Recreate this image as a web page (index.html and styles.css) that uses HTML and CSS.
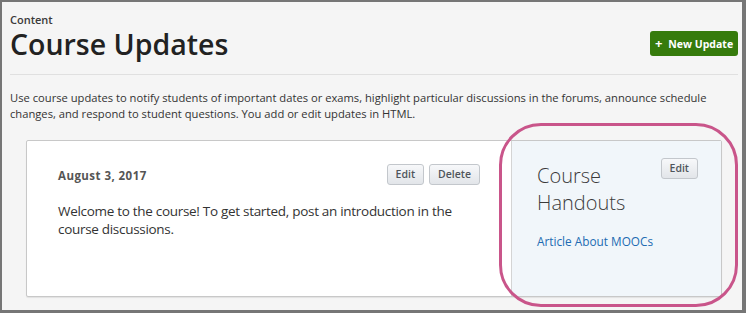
FILE: index.html
```html
<!DOCTYPE html>
<html>
<head>
<meta charset="utf-8">
<link rel="stylesheet" href="styles.css">
</head>
<body>
<div class="frame">
  <header class="page-header">
    <div class="eyebrow">Content</div>
    <div class="title-row">
      <h1 class="title">Course Updates</h1>
      <button class="btn-primary"><span class="plus">+</span>New Update</button>
    </div>
  </header>
  <p class="intro">Use course updates to notify students of important dates or exams, highlight particular discussions in the forums, announce schedule changes, and respond to student questions. You add or edit updates in HTML.</p>
  <div class="card">
    <div class="update">
      <div class="update-head">
        <div class="date">August 3, 2017</div>
        <div class="actions">
          <button class="btn">Edit</button>
          <button class="btn">Delete</button>
        </div>
      </div>
      <p class="update-body">Welcome to the course! To get started, post an introduction in the course discussions.</p>
    </div>
    <aside class="handouts">
      <div class="handouts-head">
        <h2 class="handouts-title">Course Handouts</h2>
        <button class="btn">Edit</button>
      </div>
      <a class="handout-link" href="#">Article About MOOCs</a>
    </aside>
    <div class="highlight"></div>
  </div>
</div>
</body>
</html>
```
FILE: styles.css
```css
* { box-sizing: border-box; }
html, body { margin: 0; padding: 0; }
body {
  font-family: "Open Sans", "DejaVu Sans", sans-serif;
  color: #333;
  background: #777;
}
.frame {
  width: 746px;
  height: 313px;
  overflow: hidden;
  background: #f5f5f5;
  border-style: solid;
  border-color: #767676;
  border-width: 2px 4px 3px 2px;
  padding: 10px 4px 0 8px;
}
.page-header {
  border-bottom: 1px solid #e0e0e0;
  padding-bottom: 13px;
}
.eyebrow {
  font-size: 11px;
  line-height: 15px;
  font-weight: 600;
  color: #3a3a3a;
  margin-bottom: 1px;
}
.title-row {
  display: flex;
  align-items: center;
  justify-content: space-between;
}
.title {
  margin: 0;
  font-size: 28.5px;
  line-height: 33px;
  font-weight: 600;
  color: #222;
}
.btn-primary {
  font-family: inherit;
  background: #367b0c;
  color: #fff;
  border: none;
  border-radius: 3px;
  height: 25px;
  width: 88px;
  padding: 0;
  font-size: 10.5px;
  font-weight: 700;
  display: flex;
  align-items: center;
  justify-content: center;
  margin-top: -2px;
}
.plus {
  font-size: 13px;
  font-weight: 700;
  margin-right: 6px;
  line-height: 1;
}
.intro {
  margin: 15px 0 0;
  font-size: 11.2px;
  line-height: 15.5px;
  color: #333;
}
.card {
  position: relative;
  display: flex;
  margin: 19px 16px 0;
  height: 157px;
  background: #fff;
  border: 1px solid #c8c8c8;
  border-radius: 2px;
  box-shadow: 0 1px 1px rgba(0,0,0,0.08);
}
.update {
  flex: 1;
  padding: 23px 31px 0;
  border-right: 1px solid #d4d4d4;
}
.update-head {
  display: flex;
  align-items: center;
  justify-content: space-between;
}
.date {
  font-size: 11.5px;
  font-weight: 700;
  letter-spacing: 0.45px;
  color: #555;
  margin-top: 2px;
}
.actions { display: flex; gap: 5px; }
.btn {
  font-family: inherit;
  font-size: 10.5px;
  font-weight: 600;
  color: #4f555b;
  background: linear-gradient(#f7f8fa, #e2e5e9);
  border: 1px solid #c3c7cc;
  border-radius: 3px;
  height: 21px;
  padding: 0 8px;
  line-height: 19px;
}
.update-body {
  margin: 17px 0 0;
  max-width: 405px;
  font-size: 13.5px;
  letter-spacing: -0.3px;
  line-height: 18px;
  color: #333;
}
.handouts {
  width: 209px;
  background: #f1f6fa;
  padding: 17px 23px 0 25px;
}
.handouts-head {
  display: flex;
  justify-content: space-between;
  align-items: flex-start;
}
.handouts-title {
  margin: 4px 0 0;
  font-size: 20px;
  line-height: 27px;
  font-weight: 300;
  color: #3a3a3a;
  width: 110px;
}
.handout-link {
  display: block;
  margin-top: 17px;
  font-size: 11.8px;
  line-height: 17px;
  color: #216bb2;
  text-decoration: none;
}
.highlight {
  position: absolute;
  left: 472px;
  top: -18px;
  width: 239px;
  height: 184px;
  border: 3px solid #c9558a;
  border-radius: 42px;
  pointer-events: none;
}
```
